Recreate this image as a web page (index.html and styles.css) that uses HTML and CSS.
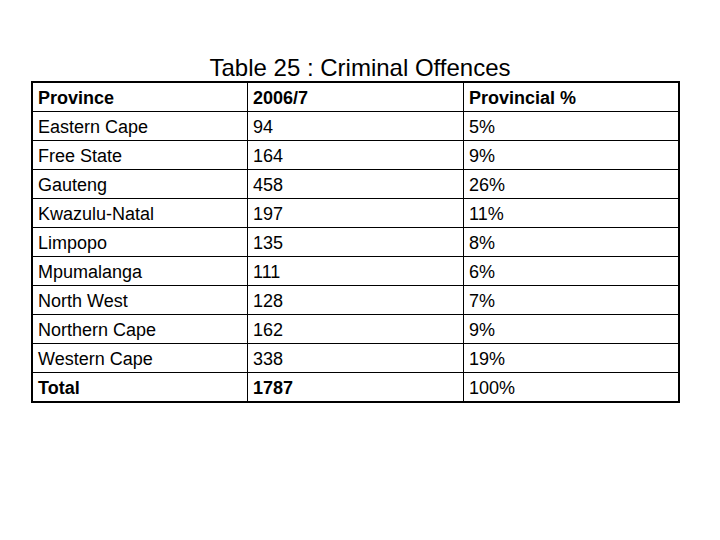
FILE: index.html
```html
<!DOCTYPE html>
<html>
<head>
<meta charset="utf-8">
<link rel="stylesheet" href="styles.css">
</head>
<body>
<div class="slide">
  <h1 class="title">Table 25 : Criminal Offences</h1>
  <table class="data">
    <tr class="head"><td>Province</td><td>2006/7</td><td>Provincial %</td></tr>
    <tr><td>Eastern Cape</td><td>94</td><td>5%</td></tr>
    <tr><td>Free State</td><td>164</td><td>9%</td></tr>
    <tr><td>Gauteng</td><td>458</td><td>26%</td></tr>
    <tr><td>Kwazulu-Natal</td><td>197</td><td>11%</td></tr>
    <tr><td>Limpopo</td><td>135</td><td>8%</td></tr>
    <tr><td>Mpumalanga</td><td>111</td><td>6%</td></tr>
    <tr><td>North West</td><td>128</td><td>7%</td></tr>
    <tr><td>Northern Cape</td><td>162</td><td>9%</td></tr>
    <tr><td>Western Cape</td><td>338</td><td>19%</td></tr>
    <tr class="total"><td>Total</td><td>1787</td><td>100%</td></tr>
  </table>
</div>
</body>
</html>
```

FILE: styles.css
```css
html, body {
  margin: 0;
  padding: 0;
  background: #ffffff;
}

.slide {
  width: 720px;
  height: 540px;
  font-family: "Liberation Sans", Arial, sans-serif;
  color: #000000;
  padding-top: 55px;
  box-sizing: border-box;
}

.title {
  margin: 0;
  font-size: 24px;
  font-weight: normal;
  line-height: 26px;
  text-align: center;
}

.data {
  margin: 0 0 0 31px;
  border: 2px solid #000000;
  border-collapse: separate;
  border-spacing: 0;
  font-size: 18px;
  line-height: 21px;
}

.data td {
  padding: 5px 5px 2px 5px;
  border-right: 1px solid #000000;
  border-bottom: 1px solid #000000;
  white-space: nowrap;
  text-align: left;
  vertical-align: top;
}

.data td:nth-child(1) { width: 204px; }
.data td:nth-child(2) { width: 205px; }
.data td:nth-child(3) { width: 204px; border-right: none; }

.data tr:last-child td { border-bottom: none; }

.data .head td,
.data .total td:nth-child(1),
.data .total td:nth-child(2) {
  font-weight: bold;
}
```
